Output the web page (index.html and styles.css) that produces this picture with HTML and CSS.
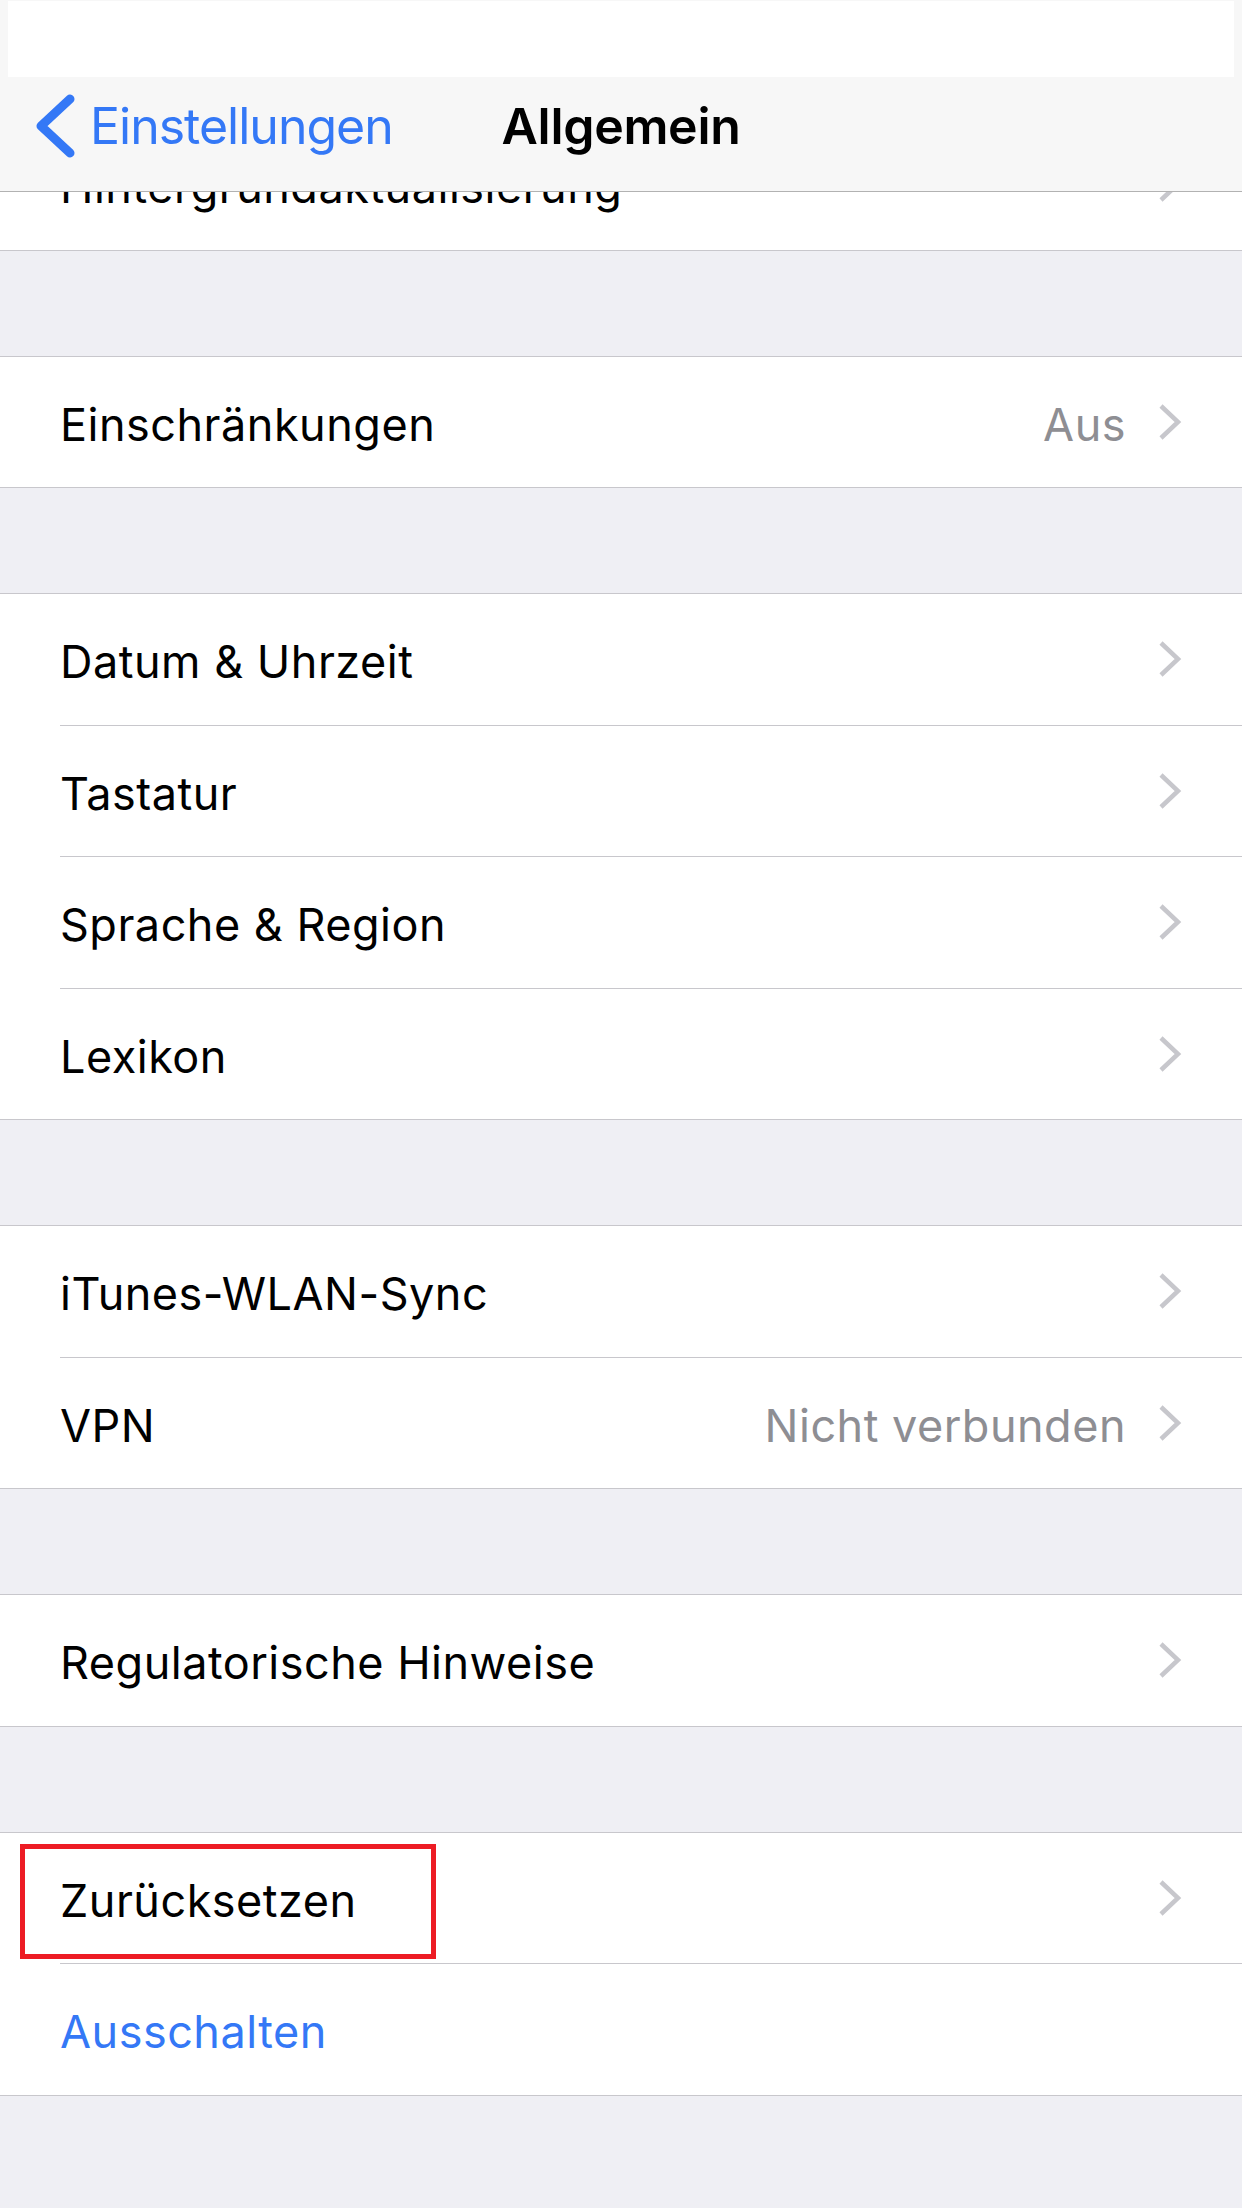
FILE: index.html
```html
<!DOCTYPE html>
<html lang="de">
<head>
<meta charset="utf-8">
<title>Allgemein</title>
<link rel="stylesheet" href="styles.css">
</head>
<body>
<div class="screen">
  <header class="navbar">
    <div class="statusbar"></div>
    <div class="navrow">
      <a class="back">
        <svg class="back-icon" viewBox="0 0 40 64" width="40" height="64"><polyline points="34,5 5,32 34,59" fill="none" stroke="#3478f6" stroke-width="9" stroke-linecap="round" stroke-linejoin="round"/></svg>
        <span class="back-label">Einstellungen</span>
      </a>
      <h1 class="title">Allgemein</h1>
      <div class="nav-spacer"></div>
    </div>
  </header>

  <main class="content">
    <section class="group group-first">
      <div class="row"><div class="row-inner"><span class="label">Hintergrundaktualisierung</span><span class="chev"><svg viewBox="0 0 24 38" width="24" height="38"><polyline points="3,3 20,19 3,35" fill="none" stroke="#c7c7cc" stroke-width="4.5"/></svg></span></div></div>
    </section>

    <section class="group">
      <div class="row"><div class="row-inner"><span class="label">Einschränkungen</span><span class="value">Aus</span><span class="chev"><svg viewBox="0 0 24 38" width="24" height="38"><polyline points="3,3 20,19 3,35" fill="none" stroke="#c7c7cc" stroke-width="4.5"/></svg></span></div></div>
    </section>

    <section class="group">
      <div class="row"><div class="row-inner"><span class="label">Datum &amp; Uhrzeit</span><span class="chev"><svg viewBox="0 0 24 38" width="24" height="38"><polyline points="3,3 20,19 3,35" fill="none" stroke="#c7c7cc" stroke-width="4.5"/></svg></span></div></div>
      <div class="row"><div class="row-inner"><span class="label">Tastatur</span><span class="chev"><svg viewBox="0 0 24 38" width="24" height="38"><polyline points="3,3 20,19 3,35" fill="none" stroke="#c7c7cc" stroke-width="4.5"/></svg></span></div></div>
      <div class="row"><div class="row-inner"><span class="label">Sprache &amp; Region</span><span class="chev"><svg viewBox="0 0 24 38" width="24" height="38"><polyline points="3,3 20,19 3,35" fill="none" stroke="#c7c7cc" stroke-width="4.5"/></svg></span></div></div>
      <div class="row"><div class="row-inner"><span class="label">Lexikon</span><span class="chev"><svg viewBox="0 0 24 38" width="24" height="38"><polyline points="3,3 20,19 3,35" fill="none" stroke="#c7c7cc" stroke-width="4.5"/></svg></span></div></div>
    </section>

    <section class="group">
      <div class="row"><div class="row-inner"><span class="label">iTunes-WLAN-Sync</span><span class="chev"><svg viewBox="0 0 24 38" width="24" height="38"><polyline points="3,3 20,19 3,35" fill="none" stroke="#c7c7cc" stroke-width="4.5"/></svg></span></div></div>
      <div class="row"><div class="row-inner"><span class="label">VPN</span><span class="value">Nicht verbunden</span><span class="chev"><svg viewBox="0 0 24 38" width="24" height="38"><polyline points="3,3 20,19 3,35" fill="none" stroke="#c7c7cc" stroke-width="4.5"/></svg></span></div></div>
    </section>

    <section class="group">
      <div class="row"><div class="row-inner"><span class="label">Regulatorische Hinweise</span><span class="chev"><svg viewBox="0 0 24 38" width="24" height="38"><polyline points="3,3 20,19 3,35" fill="none" stroke="#c7c7cc" stroke-width="4.5"/></svg></span></div></div>
    </section>

    <section class="group">
      <div class="row row-marked"><div class="row-inner"><span class="label">Zurücksetzen</span><span class="chev"><svg viewBox="0 0 24 38" width="24" height="38"><polyline points="3,3 20,19 3,35" fill="none" stroke="#c7c7cc" stroke-width="4.5"/></svg></span></div><div class="highlight-box"></div></div>
      <div class="row"><div class="row-inner"><span class="label label-action">Ausschalten</span></div></div>
    </section>
  </main>
</div>
</body>
</html>
```

FILE: styles.css
```css
* { box-sizing: border-box; }

html, body {
  margin: 0;
  padding: 0;
}

body {
  background: #efeff4;
  font-family: "Inter", "Liberation Sans", sans-serif;
  color: #000;
  width: 1242px;
  height: 2208px;
  overflow: hidden;
}

.screen {
  position: relative;
  width: 1242px;
  height: 2208px;
  overflow: hidden;
}

/* Navigation bar overlays the scrolled list */
.navbar {
  position: absolute;
  top: 0;
  left: 0;
  right: 0;
  z-index: 10;
  background: #f7f7f7;
  border-bottom: 1px solid #b2b2b2;
}

.statusbar {
  height: 76px;
  margin: 1px 8px 0;
  background: #fff;
}

.navrow {
  height: 114px;
  padding-bottom: 16px;
  display: grid;
  grid-template-columns: 1fr auto 1fr;
  align-items: center;
}

.back {
  display: flex;
  align-items: center;
  color: #3478f6;
  padding-left: 36px;
}

.back-icon {
  display: block;
  flex: none;
}

.back-label {
  font-size: 50px;
  margin-left: 14px;
  letter-spacing: -1px;
}

.title {
  margin: 0;
  font-size: 50px;
  font-weight: 600;
  letter-spacing: -0.3px;
}

/* List */
.content {
  padding-top: 119px;
}

.group {
  background: #fff;
  border-top: 1px solid #c8c7cc;
  border-bottom: 1px solid #c8c7cc;
  margin-top: 105px;
}

.group-first {
  margin-top: 0;
  border-top: none;
}

.row {
  position: relative;
  padding-left: 60px;
}

.row-inner {
  height: 131.5px;
  display: flex;
  align-items: center;
  padding-right: 60px;
  padding-top: 5px;
  border-bottom: 1px solid #c8c7cc;
}

.row:last-child .row-inner {
  border-bottom: none;
  height: 130.5px;
}

.label {
  font-size: 45px;
  letter-spacing: 0.5px;
  flex: 1;
  white-space: nowrap;
}

.label-action {
  color: #3478f6;
}

.value {
  font-size: 45px;
  letter-spacing: 0.5px;
  color: #8e8e93;
  margin-right: 32px;
}

.chev {
  display: flex;
  align-items: center;
  margin-top: -5px;
}

.chev svg {
  display: block;
}

/* Red annotation rectangle */
.highlight-box {
  position: absolute;
  left: 20px;
  top: 11px;
  width: 416px;
  height: 115px;
  border: 5px solid #ed1c24;
  pointer-events: none;
}
```
